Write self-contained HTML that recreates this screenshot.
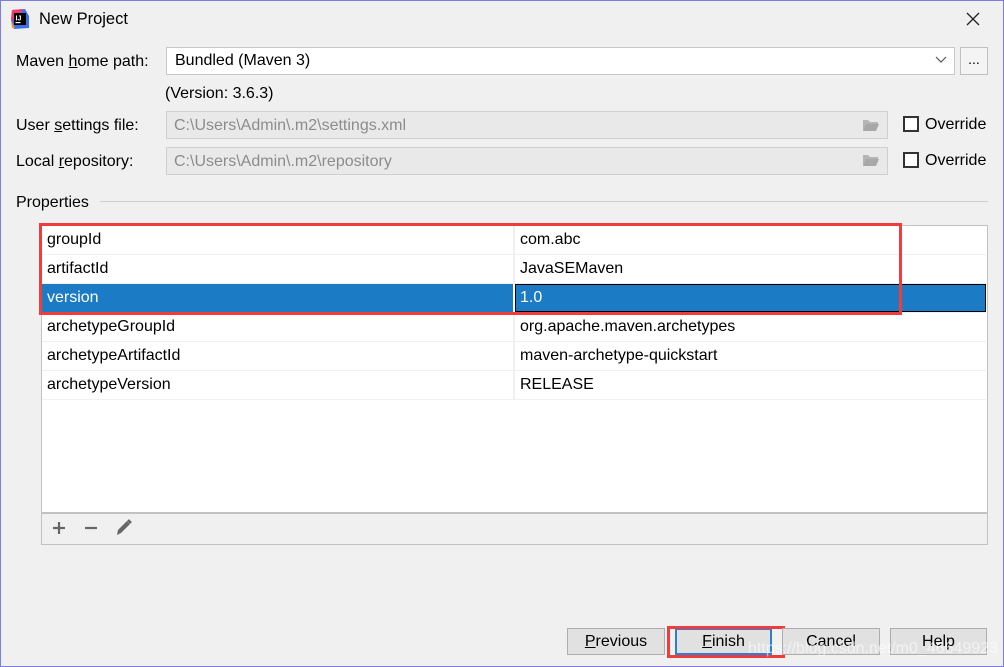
<!DOCTYPE html>
<html><head><meta charset="utf-8"><style>
*{margin:0;padding:0;box-sizing:border-box}
body{width:1004px;height:667px;background:#f0f0f0;font-family:"Liberation Sans","Noto Sans CJK SC",sans-serif;font-size:16px;color:#000;position:relative;overflow:hidden}
.a{position:absolute;white-space:nowrap}
.frame{position:absolute;left:0;top:0;width:1004px;height:667px;border:1px solid #7d7ddb;pointer-events:none}
.field{position:absolute;border:1px solid #cfcfcf;background:#e9e9e9;color:#8c8c8c;padding-left:7px}
.cb{position:absolute;width:16px;height:16px;border:2px solid #333;background:#fff}
.row{position:absolute;left:42px;width:944px;height:29px;border-bottom:1px solid #f0f0f0;background:#fff}
.row span{position:absolute;top:5px}
.row .k{left:5px}.row .v{left:478px}
.row .d{position:absolute;left:471px;top:0;width:2px;height:29px;background:#f0f0f0}
.btn{position:absolute;top:628px;height:27px;border:1px solid #adadad;background:#e1e1e1;text-align:center;line-height:25px;font-size:16px}
u{text-decoration:underline}
</style></head><body>
<div class="frame"></div>
<svg class="a" style="left:9px;top:8px" width="22" height="22" viewBox="0 0 22 22">
<path d="M3 2 L16 1 L20 8 L20 20 L5 21 L2 12Z" fill="#3b6ef0"/>
<path d="M3 2 L14 1 L8 12 L2 12Z" fill="#f03a6e"/>
<path d="M2 12 L6 20 L3 20Z" fill="#f7931e"/>
<rect x="5" y="5" width="12" height="12" fill="#000"/>
<text x="6.5" y="12.5" font-size="7" fill="#fff" font-family="Liberation Sans" font-weight="bold">IJ</text>
<rect x="6.5" y="14" width="5" height="1.2" fill="#fff"/>
</svg>
<div class="a" style="left:39px;top:10px;font-size:16.5px">New Project</div>
<svg class="a" style="left:966px;top:12px" width="14" height="14"><path d="M1 1L13 13M13 1L1 13" stroke="#222" stroke-width="1.3"/></svg>

<div class="a" style="left:16px;top:53px">Maven <u>h</u>ome path:</div>
<div class="a" style="left:166px;top:47px;width:789px;height:28px;background:#fff;border:1px solid #c8c8c8;padding-left:8px;line-height:26px">Bundled (Maven 3)</div>
<svg class="a" style="left:935px;top:56px" width="12" height="8"><path d="M1 1L6 6L11 1" stroke="#555" fill="none" stroke-width="1.2"/></svg>
<div class="a" style="left:960px;top:47px;width:28px;height:28px;border:1px solid #c0c0c0;background:#f4f4f4;text-align:center;line-height:22px;font-size:14px">...</div>
<div class="a" style="left:165px;top:85px">(Version: 3.6.3)</div>

<div class="a" style="left:16px;top:117px">User <u>s</u>ettings file:</div>
<div class="field" style="left:166px;top:111px;width:722px;height:28px;line-height:28px">C:\Users\Admin\.m2\settings.xml</div>
<div class="a" style="left:16px;top:153px">Local <u>r</u>epository:</div>
<div class="field" style="left:166px;top:147px;width:722px;height:28px;line-height:28px">C:\Users\Admin\.m2\repository</div>
<svg class="a" style="left:862px;top:118px" width="18" height="14"><path d="M1 2h5l2 2h8v2H5L1 13Z" fill="#b5b5b5"/><path d="M4 6h13l-3 7H1Z" fill="#a8a8a8"/></svg>
<svg class="a" style="left:862px;top:153px" width="18" height="14"><path d="M1 2h5l2 2h8v2H5L1 13Z" fill="#b5b5b5"/><path d="M4 6h13l-3 7H1Z" fill="#a8a8a8"/></svg>
<div class="cb" style="left:903px;top:116px"></div><div class="a" style="left:925px;top:116px">Override</div>
<div class="cb" style="left:903px;top:152px"></div><div class="a" style="left:925px;top:152px">Override</div>

<div class="a" style="left:16px;top:194px">Properties</div>
<div class="a" style="left:100px;top:201px;width:888px;height:1px;background:#cfcfcf"></div>

<div class="a" style="left:41px;top:225px;width:947px;height:320px;border:1px solid #c2c2c2;background:#fff"></div>
<div class="row" style="top:226px"><span class="k">groupId</span><div class="d"></div><span class="v">com.abc</span></div>
<div class="row" style="top:255px"><span class="k">artifactId</span><div class="d"></div><span class="v">JavaSEMaven</span></div>
<div class="row" style="top:284px;background:#1b7bc4;color:#fff"><span class="k">version</span><div class="d" style="background:#fff;width:2px"></div>
<div class="a" style="left:473px;top:0;width:471px;height:28px;border:1px solid #000;background:#1b7bc4"></div><span class="v" style="left:478px">1.0</span></div>
<div class="row" style="top:313px"><span class="k">archetypeGroupId</span><div class="d"></div><span class="v">org.apache.maven.archetypes</span></div>
<div class="row" style="top:342px"><span class="k">archetypeArtifactId</span><div class="d"></div><span class="v">maven-archetype-quickstart</span></div>
<div class="row" style="top:371px"><span class="k">archetypeVersion</span><div class="d"></div><span class="v">RELEASE</span></div>
<div class="a" style="left:42px;top:512px;width:945px;height:32px;background:#f0f0f0;border-top:2px solid #c2c2c2"></div>
<svg class="a" style="left:50px;top:519px" width="90" height="18">
<path d="M3 9h12M9 3v12" stroke="#666" stroke-width="2.2"/>
<path d="M35 9h12" stroke="#666" stroke-width="2.2"/>
<path d="M67 16l1-5 9-9 3 3-9 9z" fill="#666"/><path d="M78 1l3 3" stroke="#666" stroke-width="2.5"/>
</svg>

<div class="a" style="left:39px;top:223px;width:863px;height:92px;border:3px solid #f03c3c"></div>

<div class="btn" style="left:567px;width:98px"><u>P</u>revious</div>
<div class="btn" style="left:675px;width:97px;border:2px solid #2b7fd6;line-height:23px"><u>F</u>inish</div>
<div class="a" style="left:667px;top:626px;width:118px;height:32px;border:3px solid #f03c3c"></div>
<div class="btn" style="left:782px;width:98px">Cancel</div>
<div class="btn" style="left:890px;width:97px">Help</div>
<div class="a" style="left:748px;top:640px;color:rgba(255,255,255,0.6);font-size:16px">https://blog.csdn.net/m0_46649923</div>
</body></html>
